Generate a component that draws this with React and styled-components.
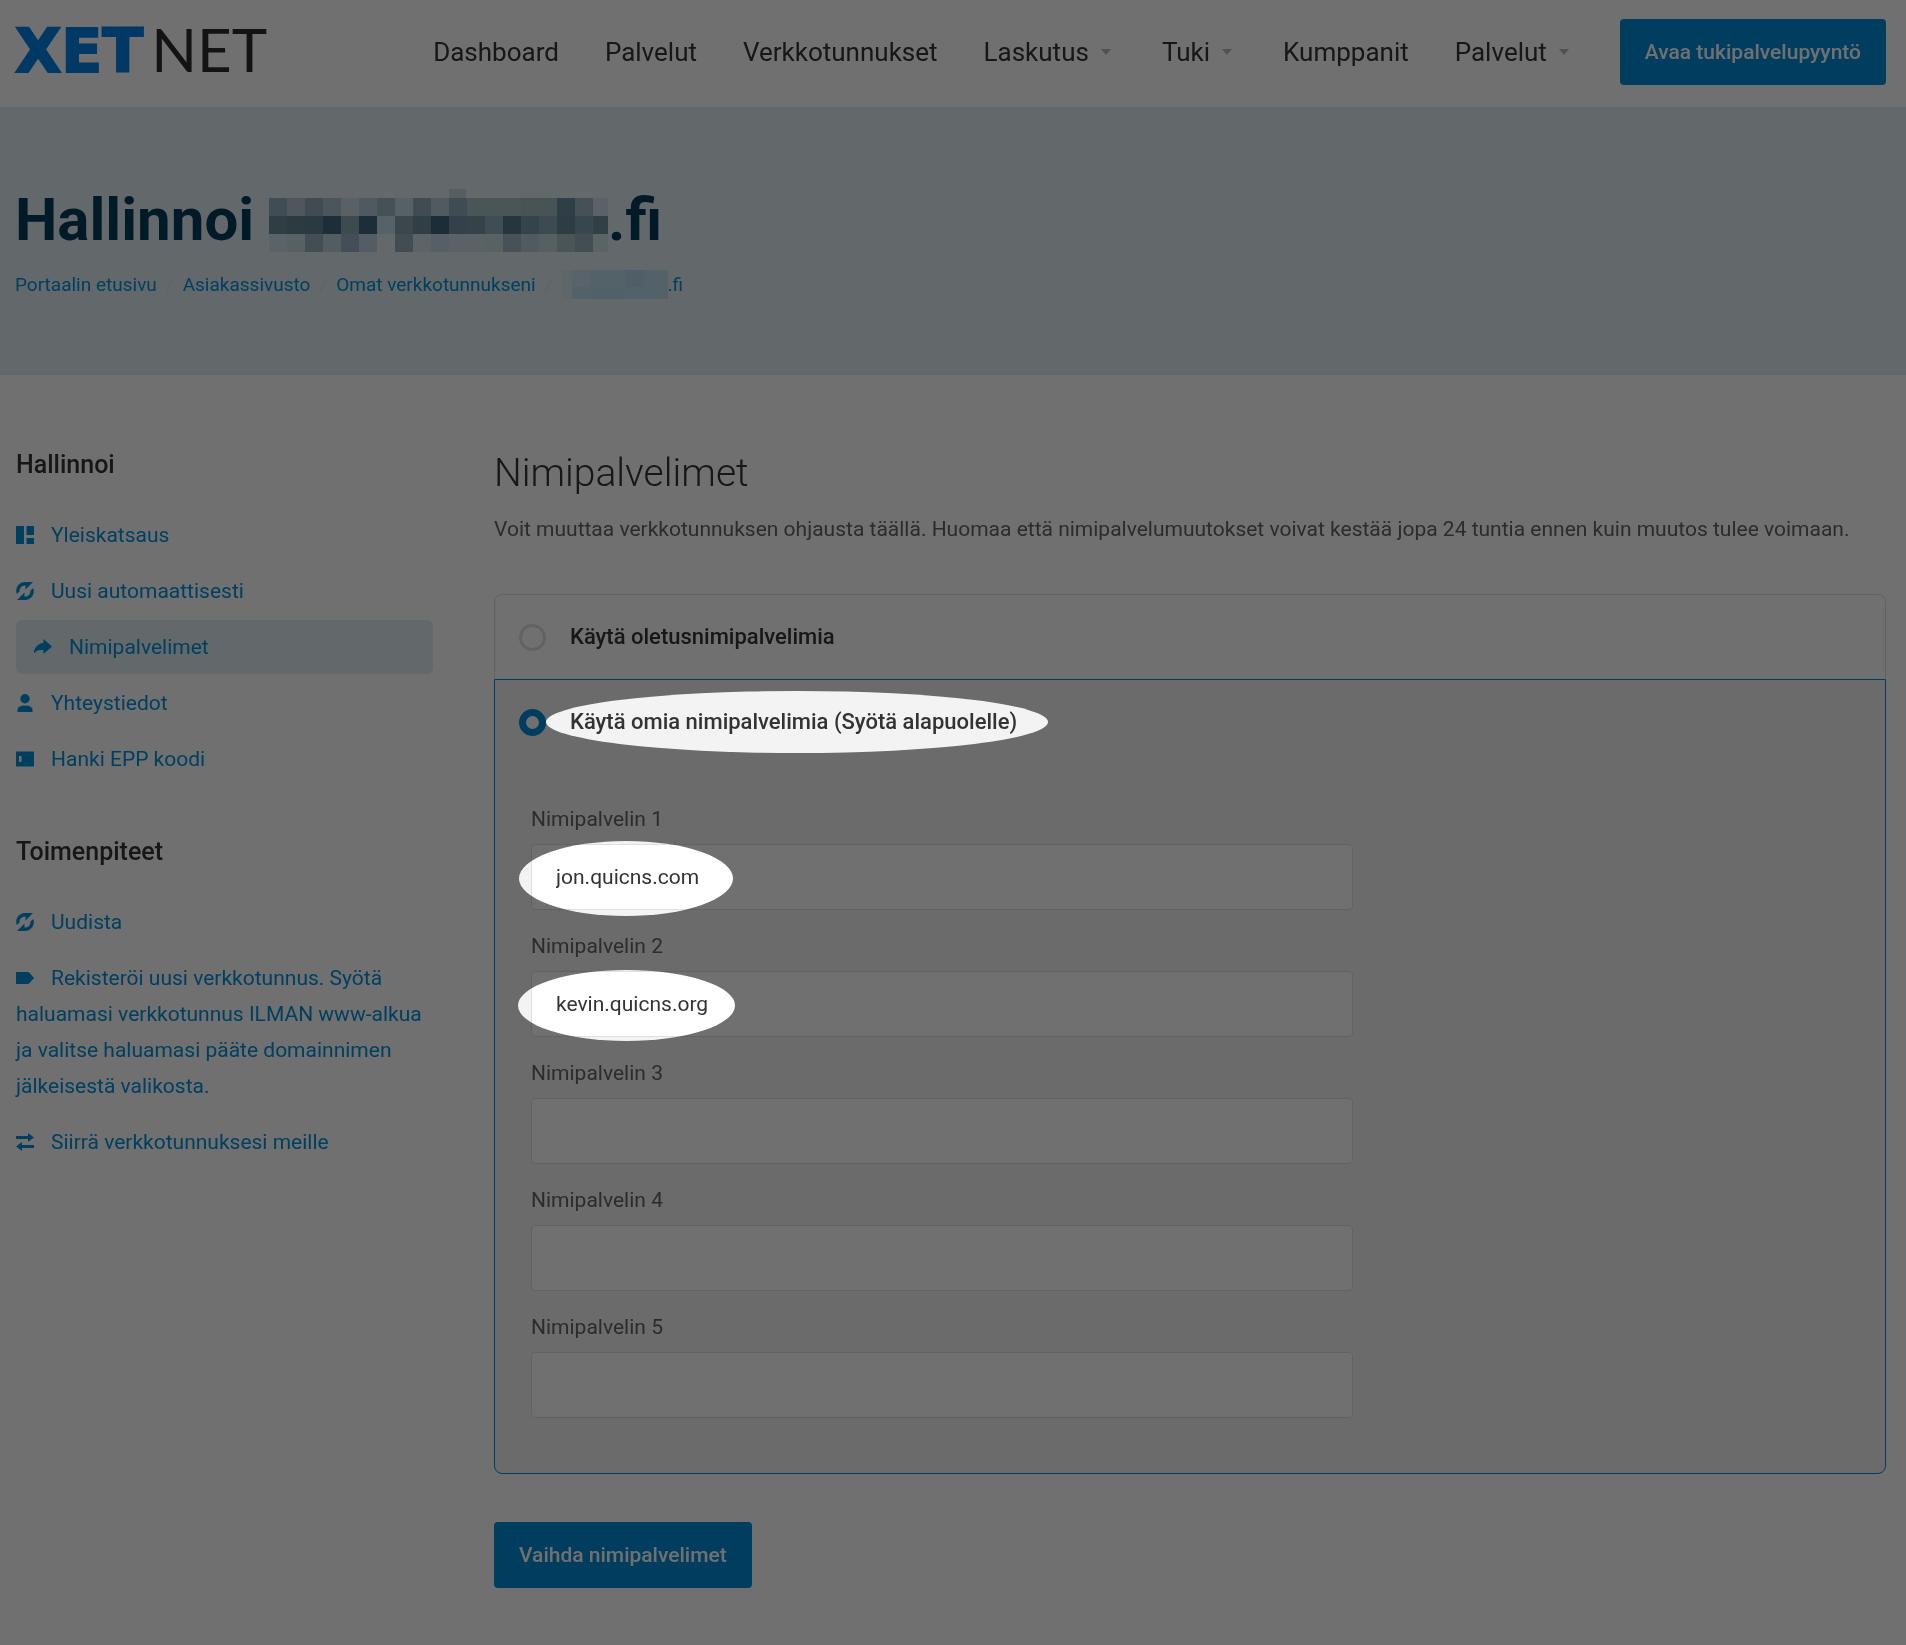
import React from "react";
import styled, { createGlobalStyle } from "styled-components";

const colors = {
  primary: "#008bd6",
  link: "#0090d9",
  text: "#333333",
  muted: "#636363",
  navy: "#003a57",
  hero: "#e1ecf3",
  panel: "#f3f3f3",
  border: "#e0e0e0",
};

const navItems = [
  { label: "Dashboard" },
  { label: "Palvelut" },
  { label: "Verkkotunnukset" },
  { label: "Laskutus", menu: true },
  { label: "Tuki", menu: true },
  { label: "Kumppanit" },
  { label: "Palvelut", menu: true },
];

const crumbs = ["Portaalin etusivu", "Asiakassivusto", "Omat verkkotunnukseni"];

const sections = [
  {
    title: "Hallinnoi",
    links: [
      { icon: "overview", label: "Yleiskatsaus" },
      { icon: "renew", label: "Uusi automaattisesti" },
      { icon: "share", label: "Nimipalvelimet", active: true },
      { icon: "user", label: "Yhteystiedot" },
      { icon: "card", label: "Hanki EPP koodi" },
    ],
  },
  {
    title: "Toimenpiteet",
    links: [
      { icon: "renew", label: "Uudista" },
      {
        icon: "tag",
        label:
          "Rekisteröi uusi verkkotunnus. Syötä haluamasi verkkotunnus ILMAN www-alkua ja valitse haluamasi pääte domainnimen jälkeisestä valikosta.",
      },
      { icon: "transfer", label: "Siirrä verkkotunnuksesi meille" },
    ],
  },
];

const nameservers = ["jon.quicns.com", "kevin.quicns.org", "", "", ""];

const spotlights = [
  { left: 546, top: 691, width: 502, height: 62 },
  { left: 519, top: 841, width: 214, height: 75 },
  { left: 518, top: 970, width: 217, height: 71 },
];

const icons = {
  overview: <path d="M0 0h8v18H0zM10.500 0H18v9h-7.500zM10.500 12H18v6h-7.500z" />,
  renew: (
    <path d="M17 0 9.500 7.500V3.500A5.500 5.500 0 0 0 3.500 9.500L.800 12A8.800 8.800 0 0 1 9 0zM1 18l7.500-7.500v4A5.500 5.500 0 0 0 14.500 8.500L17.200 6A8.800 8.800 0 0 1 9 18z" />
  ),
  share: (
    <path d="M9.500 1 18 8.500 9.500 16v-4C5 11.500 2 12.500 0 15.500 0 9.500 4 5.500 9.500 5z" />
  ),
  user: (
    <path d="M9 0a4.700 4.700 0 1 1 0 9.400A4.700 4.700 0 0 1 9 0zM1.500 18v-2.500C1.500 13 5 11.500 9 11.500s7.500 1.500 7.500 4V18z" />
  ),
  card: <path fillRule="evenodd" d="M0 1.500h18v15H0zM3 6v6h2.500V6z" />,
  tag: <path d="M0 3h11.500q1.500 0 2.200.9L18 9l-4.300 5.100q-.700.900-2.200.900H0z" />,
  transfer: (
    <path d="M0 3h12V0l6 4.500L12 9V6H0zM18 12v3H6v3l-6-4.500L6 9v3z" />
  ),
};

const titleMosaic = [
  ["#414d54", "#4f575d", "#414c52", "#4b555b", "#596165", "#4f595f", "#465157", "#566065", "#414c52", "#515a60", "#3f4c53", "#4a5558", "#4a5558", "#4a5558", "#485356", "#485356", "#2e3f47", "#465156", "#5a6267"],
  ["#303e44", "#2d3a40", "#2b3940", "#1d2e3a", "#3d4a50", "#1e2e39", "#566168", "#3b474b", "#313e44", "#1c2d3a", "#34414a", "#354249", "#414d55", "#27353d", "#35434b", "#3d4a51", "#2e3d43", "#38464d", "#323f44"],
  ["#596368", "#576163", "#434e54", "#535d61", "#434e56", "#535d63", "#63686b", "#424d52", "#5c6468", "#565f65", "#5a6267", "#5a6265", "#586265", "#465257", "#515b5f", "#566063", "#4a5557", "#434e53", "#5a6366"],
];

export default function App() {
  return (
    <Page>
      <GlobalStyle />
      <Header>
        <Logo href="#">
          <LogoStrong>XET</LogoStrong>
          <LogoLight>NET</LogoLight>
        </Logo>
        <Nav>
          {navItems.map((item, i) => (
            <NavLink href="#" key={i}>
              {item.label}
              {item.menu && <Caret />}
            </NavLink>
          ))}
          <Button type="button">Avaa tukipalvelupyyntö</Button>
        </Nav>
      </Header>

      <Hero>
        <HeroTitle>
          Hallinnoi <TitleMosaic />
          .fi
        </HeroTitle>
        <Breadcrumb>
          {crumbs.map((crumb) => (
            <React.Fragment key={crumb}>
              <Crumb href="#">{crumb}</Crumb>
              <Slash>/</Slash>
            </React.Fragment>
          ))}
          <Crumb href="#">
            <CrumbMosaic />
            .fi
          </Crumb>
        </Breadcrumb>
      </Hero>

      <Content>
        <Sidebar>
          {sections.map((section) => (
            <section key={section.title}>
              <SideTitle>{section.title}</SideTitle>
              <SideList>
                {section.links.map((link) => (
                  <li key={link.label}>
                    <SideLink href="#" $active={link.active}>
                      <Icon viewBox="0 0 18 18">{icons[link.icon]}</Icon>
                      {link.label}
                    </SideLink>
                  </li>
                ))}
              </SideList>
            </section>
          ))}
        </Sidebar>

        <Main>
          <MainTitle>Nimipalvelimet</MainTitle>
          <Intro>
            Voit muuttaa verkkotunnuksen ohjausta täällä. Huomaa että
            nimipalvelumuutokset voivat kestää jopa 24 tuntia ennen kuin muutos
            tulee voimaan.
          </Intro>
          <form>
            <Option>
              <OptionLabel>
                <Radio type="radio" name="ns" />
                Käytä oletusnimipalvelimia
              </OptionLabel>
            </Option>
            <Option $selected>
              <OptionLabel>
                <Radio type="radio" name="ns" defaultChecked />
                Käytä omia nimipalvelimia (Syötä alapuolelle)
              </OptionLabel>
              <Fields>
                {nameservers.map((value, i) => (
                  <Field key={i}>
                    <FieldLabel htmlFor={`ns${i + 1}`}>
                      Nimipalvelin {i + 1}
                    </FieldLabel>
                    <Input id={`ns${i + 1}`} type="text" defaultValue={value} />
                  </Field>
                ))}
              </Fields>
            </Option>
            <Button type="button">Vaihda nimipalvelimet</Button>
          </form>
        </Main>
      </Content>

      <Dimmer>
        {spotlights.map((spot) => (
          <Spotlight key={spot.top} $spot={spot} />
        ))}
      </Dimmer>
    </Page>
  );
}

// Blurred-out domain name, one rect per mosaic tile
function TitleMosaic() {
  return (
    <Mosaic viewBox="0 0 339 63" width="339" height="63" $shift={-12}>
      <rect x="180" y="0" width="17" height="9" fill="#555e60" />
      {titleMosaic.map((row, y) =>
        row.map((fill, x) => (
          <rect
            key={`${x}-${y}`}
            x={x * 18}
            y={9 + y * 18}
            width="18"
            height="18"
            fill={fill}
          />
        ))
      )}
    </Mosaic>
  );
}

function CrumbMosaic() {
  return (
    <Mosaic viewBox="0 0 106 29" width="106" height="29" $shift={-8}>
      <rect width="106" height="29" fill="#536169" />
      <rect width="10" height="29" fill="#5f666a" />
      <rect x="10" width="18" height="17" fill="#596369" />
      <rect x="64" y="0" width="18" height="17" fill="#505f67" />
      <rect x="28" y="17" width="36" height="12" fill="#51616a" />
    </Mosaic>
  );
}

const GlobalStyle = createGlobalStyle`
  * {
    box-sizing: border-box;
  }

  body {
    margin: 0;
    background: #707070;
    color: ${colors.text};
    font-family: Roboto, "Liberation Sans", sans-serif;
    font-size: 21px;
    line-height: 36px;
  }

  a {
    color: ${colors.link};
    text-decoration: none;
  }
`;

const Page = styled.div`
  position: relative;
  min-height: 100vh;
  padding-bottom: 56px;
  background: #ffffff;
`;

const Header = styled.header`
  display: flex;
  align-items: center;
  justify-content: space-between;
  height: 107px;
  padding: 0 20px 3px 15px;
`;

const Logo = styled.a`
  display: flex;
  align-items: baseline;
  gap: 8px;
  padding-bottom: 4px;
  line-height: 60px;
`;

const LogoStrong = styled.span`
  color: #0080e8;
  font-family: "DejaVu Sans", sans-serif;
  font-size: 60px;
  font-weight: 700;
  -webkit-text-stroke: 2px #0080e8;
`;

const LogoLight = styled.span`
  color: #2b2b2b;
  font-family: Lato, sans-serif;
  font-size: 60px;
  font-weight: 400;
`;

const Nav = styled.nav`
  display: flex;
  align-items: center;
  gap: 46px;
`;

const NavLink = styled.a`
  display: flex;
  align-items: center;
  gap: 12px;
  color: ${colors.text};
  font-size: 26px;
`;

const Caret = styled.span`
  margin-right: 5px;
  border: 5px solid transparent;
  border-top: 6px solid #b4babe;
  border-bottom: 0;
`;

const Button = styled.button`
  height: 66px;
  padding: 0 25px;
  border: 0;
  border-radius: 4px;
  background: ${colors.primary};
  color: #ffffff;
  font-family: inherit;
  font-size: 21px;
  font-weight: 500;
`;

const Hero = styled.section`
  height: 268px;
  padding: 77px 15px 0;
  border-bottom: 2px solid #dbe8f1;
  background: ${colors.hero};
`;

const HeroTitle = styled.h1`
  margin: 0;
  color: ${colors.navy};
  font-size: 60px;
  font-weight: 700;
  line-height: 72px;
`;

const Mosaic = styled.svg`
  vertical-align: ${(props) => props.$shift}px;
  filter: brightness(2.277);
`;

const Breadcrumb = styled.nav`
  display: flex;
  align-items: center;
  gap: 9px;
  margin-top: 11px;
  font-size: 19px;
`;

const Crumb = styled.a`
  color: ${colors.link};
`;

const Slash = styled.span`
  color: #d9e3ea;
`;

const Content = styled.div`
  display: flex;
  gap: 61px;
  padding: 70px 20px 0 16px;
`;

const Sidebar = styled.aside`
  flex: 0 0 417px;
`;

const SideTitle = styled.h3`
  margin: 0 0 23px;
  font-size: 25px;
  font-weight: 500;
  line-height: 40px;
`;

const SideList = styled.ul`
  margin: 0 0 46px;
  padding: 0;
  list-style: none;
`;

const SideLink = styled.a`
  display: block;
  margin-bottom: 2px;
  padding: 9px ${(props) => (props.$active ? 18 : 0)}px;
  border-radius: 6px;
  background: ${(props) => (props.$active ? colors.hero : "transparent")};
`;

const Icon = styled.svg`
  width: 18px;
  height: 18px;
  margin-right: 17px;
  vertical-align: -2px;
  fill: currentColor;
`;

const Main = styled.main`
  flex: 1;
  min-width: 0;
`;

const MainTitle = styled.h2`
  margin: 0 0 10px;
  font-size: 39px;
  font-weight: 300;
  line-height: 56px;
`;

const Intro = styled.p`
  margin: 0 0 47px;
  color: ${colors.muted};
`;

const Option = styled.div`
  border: 1px solid ${(props) => (props.$selected ? colors.primary : colors.border)};
  border-radius: ${(props) => (props.$selected ? "0 0 8px 8px" : "8px 8px 0 0")};
  border-bottom-width: ${(props) => (props.$selected ? 1 : 0)}px;
  background: ${(props) => (props.$selected ? colors.panel : "#ffffff")};
  margin-bottom: ${(props) => (props.$selected ? 48 : 0)}px;
`;

const OptionLabel = styled.label`
  display: flex;
  align-items: center;
  gap: 24px;
  height: 84px;
  padding: 0 24px;
  font-size: 22px;
  font-weight: 500;
`;

const Radio = styled.input`
  appearance: none;
  width: 27px;
  height: 27px;
  margin: 0;
  border: 3px solid #e0e0e0;
  border-radius: 50%;
  background: #ffffff;

  &:checked {
    border: 7px solid ${colors.primary};
  }
`;

const Fields = styled.div`
  display: grid;
  gap: 18px;
  width: calc(60% + 24px);
  padding: 37px 0 55px 36px;
`;

const Field = styled.div`
  display: flex;
  flex-direction: column;
`;

const FieldLabel = styled.label`
  margin-bottom: 7px;
  color: ${colors.muted};
`;

const Input = styled.input`
  height: 66px;
  padding: 0 24px;
  border: 1px solid ${colors.border};
  border-radius: 4px;
  background: #ffffff;
  color: ${colors.text};
  font-family: inherit;
  font-size: 21px;
`;

// Grey multiplied over the page; the white ellipses leave it untouched
const Dimmer = styled.div`
  position: absolute;
  inset: 0;
  background: #707070;
  mix-blend-mode: multiply;
  pointer-events: none;
`;

const Spotlight = styled.div`
  position: absolute;
  left: ${(props) => props.$spot.left}px;
  top: ${(props) => props.$spot.top}px;
  width: ${(props) => props.$spot.width}px;
  height: ${(props) => props.$spot.height}px;
  border-radius: 50%;
  background: #ffffff;
`;
